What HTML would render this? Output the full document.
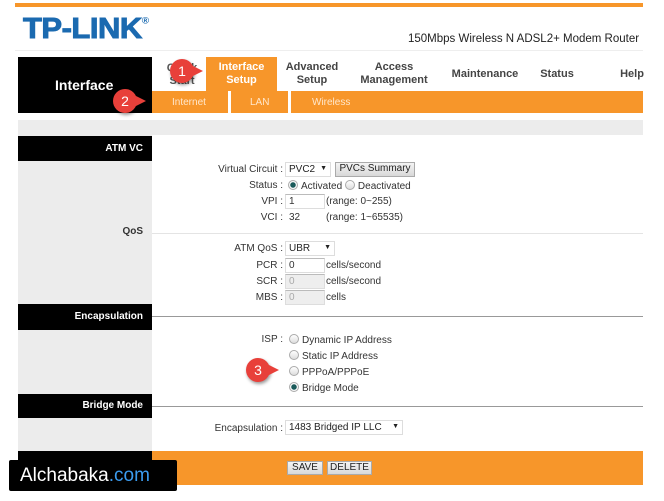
<!DOCTYPE html>
<html><head><meta charset="utf-8"><style>
*{margin:0;padding:0;box-sizing:border-box}
body{width:664px;height:501px;background:#fff;position:relative;overflow:hidden;font-family:"Liberation Sans",sans-serif;font-size:10px;color:#222}
.a{position:absolute}
.blk{position:absolute;background:#000;color:#fff;font-weight:bold;font-size:10px;text-align:right;padding-right:9px}
.lbl{position:absolute;text-align:right;width:120px;left:163px;font-size:10px;color:#333}
.v{position:absolute;font-size:10px;color:#333}
.in{position:absolute;height:15px;border:1px solid #ddd;border-top-color:#bbb;background:#fff;font-size:10px;padding:1px 3px;width:40px;color:#333}
.dis{background:#eee;color:#aaa}
.rad{display:inline-block;width:10px;height:10px;border-radius:50%;border:1px solid #aaa;background:linear-gradient(#fff,#ddd);vertical-align:-1px;margin-right:3px}
.on{background:radial-gradient(circle,#1a5a5a 0 2.5px,#fff 3px,#ddd)}
.nav{position:absolute;text-align:center;font-weight:bold;font-size:11px;color:#444;line-height:13px}
.badge{position:absolute;width:24px;height:24px;border-radius:50%;background:#e8403a;color:#fff;font-size:14px;text-align:center;line-height:24px;box-shadow:1px 2px 3px rgba(0,0,0,.4)}
.badge:after{content:"";position:absolute;right:-9px;top:6px;border-left:12px solid #e8403a;border-top:6px solid transparent;border-bottom:6px solid transparent}
.btn{position:absolute;height:14px;border:1px solid #aaa;background:linear-gradient(#f4f4f4,#d8d8d8);font-size:10px;text-align:center;line-height:12px;color:#222}
.sel{position:absolute;height:15px;border:1px solid #ddd;background:#fff;font-size:10px;padding:1px 3px;color:#222}
.sel:after{content:"▼";position:absolute;right:3px;top:2px;font-size:7px}
</style></head><body>
<div class="a" style="left:15px;top:3px;width:628px;height:4px;background:#f7962a"></div>
<div class="a" style="left:23px;top:11px;font-size:31px;font-weight:900;color:#1b6ab0;letter-spacing:-0.5px;transform:scaleY(0.92);-webkit-text-stroke:1px #1b6ab0">TP-LINK<sup style="font-size:10px;vertical-align:top;position:relative;top:4px;-webkit-text-stroke:0">®</sup></div>
<div class="a" style="left:408px;top:33px;font-size:11.5px;color:#222">150Mbps Wireless N ADSL2+ Modem Router</div>
<div class="a" style="left:15px;top:50px;width:628px;height:1px;background:#eee"></div>
<div class="a" style="left:18px;top:57px;width:134px;height:56px;background:#000;color:#fff;font-weight:bold;font-size:14px;padding:20px 0 0 37px">Interface</div>
<div class="a" style="left:206px;top:57px;width:71px;height:34px;background:#f7962a"></div>
<div class="nav" style="left:160px;top:62px;width:44px;color:#555">Quick<br>Start</div>
<div class="nav" style="left:206px;top:61px;width:71px;color:#fff">Interface<br>Setup</div>
<div class="nav" style="left:280px;top:61px;width:64px">Advanced<br>Setup</div>
<div class="nav" style="left:355px;top:61px;width:78px">Access<br>Management</div>
<div class="nav" style="left:448px;top:68px;width:74px">Maintenance</div>
<div class="nav" style="left:535px;top:68px;width:44px">Status</div>
<div class="nav" style="left:615px;top:68px;width:34px">Help</div>
<div class="a" style="left:152px;top:91px;width:491px;height:22px;background:#f7962a"></div>
<div class="a" style="left:228px;top:91px;width:3px;height:22px;background:#fff"></div>
<div class="a" style="left:288px;top:91px;width:3px;height:22px;background:#fff"></div>
<div class="a" style="left:172px;top:97px;color:#ffe7cc;font-size:10px">Internet</div>
<div class="a" style="left:250px;top:97px;color:#ffe7cc;font-size:10px">LAN</div>
<div class="a" style="left:312px;top:97px;color:#ffe7cc;font-size:10px">Wireless</div>
<div class="a" style="left:18px;top:120px;width:625px;height:15px;background:#ececec"></div>
<div class="a" style="left:18px;top:135px;width:134px;height:350px;background:#ececec"></div>
<div class="blk" style="left:18px;top:136px;width:134px;height:25px;line-height:25px">ATM VC</div>
<div class="a" style="left:18px;top:226px;width:134px;text-align:right;padding-right:9px;font-weight:bold;font-size:10px;color:#333">QoS</div>
<div class="blk" style="left:18px;top:304px;width:134px;height:26px;line-height:26px">Encapsulation</div>
<div class="blk" style="left:18px;top:394px;width:134px;height:24px;line-height:24px">Bridge Mode</div>
<div class="a" style="left:152px;top:233px;width:491px;height:1px;background:#e4e4e4"></div>
<div class="a" style="left:152px;top:316px;width:491px;height:1px;background:#999"></div>
<div class="a" style="left:152px;top:406px;width:491px;height:1px;background:#999"></div>

<div class="lbl" style="top:164px">Virtual Circuit :</div>
<div class="sel" style="left:285px;top:162px;width:46px">PVC2</div>
<div class="btn" style="left:335px;top:162px;width:80px;height:15px">PVCs Summary</div>
<div class="lbl" style="top:180px">Status :</div>
<div class="v" style="left:288px;top:180px"><span class="rad on"></span>Activated <span class="rad"></span>Deactivated</div>
<div class="lbl" style="top:196px">VPI :</div>
<div class="in" style="left:285px;top:194px">1</div><div class="v" style="left:326px;top:196px">(range: 0~255)</div>
<div class="lbl" style="top:212px">VCI :</div>
<div class="in" style="left:285px;top:210px;border-color:#fff">32</div><div class="v" style="left:326px;top:212px">(range: 1~65535)</div>

<div class="lbl" style="top:243px">ATM QoS :</div>
<div class="sel" style="left:285px;top:241px;width:50px">UBR</div>
<div class="lbl" style="top:260px">PCR :</div>
<div class="in" style="left:285px;top:258px">0</div><div class="v" style="left:326px;top:260px">cells/second</div>
<div class="lbl" style="top:276px">SCR :</div>
<div class="in dis" style="left:285px;top:274px">0</div><div class="v" style="left:326px;top:276px">cells/second</div>
<div class="lbl" style="top:292px">MBS :</div>
<div class="in dis" style="left:285px;top:290px">0</div><div class="v" style="left:326px;top:292px">cells</div>

<div class="lbl" style="top:334px">ISP :</div>
<div class="v" style="left:289px;top:334px"><span class="rad"></span>Dynamic IP Address</div>
<div class="v" style="left:289px;top:350px"><span class="rad"></span>Static IP Address</div>
<div class="v" style="left:289px;top:366px"><span class="rad"></span>PPPoA/PPPoE</div>
<div class="v" style="left:289px;top:382px"><span class="rad on"></span>Bridge Mode</div>

<div class="lbl" style="top:423px">Encapsulation :</div>
<div class="sel" style="left:285px;top:420px;width:118px">1483 Bridged IP LLC</div>

<div class="a" style="left:18px;top:451px;width:134px;height:34px;background:#000"></div>
<div class="a" style="left:152px;top:451px;width:491px;height:34px;background:#f7962a"></div>
<div class="btn" style="left:287px;top:461px;width:36px">SAVE</div>
<div class="btn" style="left:327px;top:461px;width:45px">DELETE</div>

<div class="a" style="left:9px;top:460px;width:168px;height:31px;background:#000;border-radius:2px;color:#fff;font-size:19px;line-height:31px;padding-left:11px">Alchabaka<span style="color:#3b9cf0">.com</span></div>

<div class="badge" style="left:170px;top:59px">1</div>
<div class="badge" style="left:113px;top:89px">2</div>
<div class="badge" style="left:246px;top:358px">3</div>
</body></html>
